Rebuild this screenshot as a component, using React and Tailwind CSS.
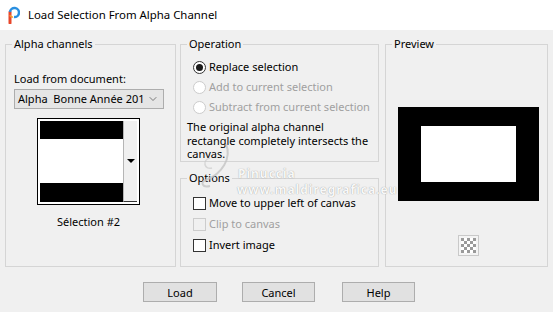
import { ChevronDown } from 'lucide-react'

function Radio({ checked, disabled, label }) {
  return (
    <div className="flex h-[20px] items-center gap-[3px] whitespace-nowrap">
      <span
        className={`grid h-[13px] w-[13px] place-items-center rounded-full border bg-white ${
          disabled ? 'border-[#cccccc] bg-[#f0f0f0]' : 'border-[#333333]'
        }`}
      >
        {checked ? <span className="h-[7px] w-[7px] rounded-full bg-[#1a1a1a]" /> : null}
      </span>
      <span className={disabled ? 'text-[#a0a0a0]' : 'text-black'}>{label}</span>
    </div>
  )
}

function Check({ disabled, label }) {
  return (
    <div className="flex h-[21px] items-center gap-[3px] whitespace-nowrap">
      <span
        className={`h-[13px] w-[13px] border ${
          disabled ? 'border-[#cccccc] bg-[#f0f0f0]' : 'border-[#333333] bg-white'
        }`}
      />
      <span className={disabled ? 'text-[#a0a0a0]' : 'text-black'}>{label}</span>
    </div>
  )
}

function Group({ title, className, children }) {
  return (
    <fieldset className={`border border-[#d5d5d5] ${className}`}>
      <legend className="ml-[6px] px-[2px] leading-[16px]">{title}</legend>
      {children}
    </fieldset>
  )
}

function AppIcon() {
  return (
    <svg width="14" height="18" viewBox="0 0 14 18">
      <path d="M4 17 V6" stroke="#e8462a" strokeWidth="3" strokeLinecap="round" fill="none" />
      <path d="M4 6 A4.5 4.5 0 1 1 8 11" stroke="#2a8fe0" strokeWidth="2.5" fill="none" />
      <path d="M4 9 A2.5 2.5 0 0 0 7 11" stroke="#f39a2a" strokeWidth="1.5" fill="none" />
    </svg>
  )
}

function Checker() {
  const cells = []
  for (let r = 0; r < 5; r++) {
    for (let c = 0; c < 5; c++) {
      if ((r + c) % 2 === 0) cells.push(<rect key={`${r}-${c}`} x={3 + c * 3} y={3 + r * 3} width="3" height="3" fill="#9a9a9a" />)
    }
  }
  return (
    <svg width="21" height="21" viewBox="0 0 21 21">
      <rect x="0.5" y="0.5" width="20" height="20" fill="#f4f4f4" stroke="#c9c9c9" />
      <rect x="3" y="3" width="15" height="15" fill="#ffffff" />
      {cells}
    </svg>
  )
}

export default function App() {
  return (
    <div className="relative h-[312px] w-[553px] overflow-hidden bg-[#f0f0f0] font-['Noto_Sans',sans-serif] text-[11px] text-black">
      <div className="flex h-[30px] items-center gap-[8px] bg-white pl-[6px]">
        <AppIcon />
        <span className="text-[11.4px]">Load Selection From Alpha Channel</span>
      </div>

      <div className="flex pt-[6px] pl-[5px]">
        <Group title="Alpha channels" className="h-[231px] w-[171px]">
          <div className="pl-[8px]">
            <p className="mt-[19px] leading-[16px]">Load from document:</p>
            <div className="mt-[2px] flex h-[20px] w-[150px] items-center justify-between border border-[#adadad] bg-[#e5e5e5] pl-[3px] pr-[4px]">
              <span className="whitespace-nowrap">Alpha&nbsp;&nbsp;Bonne Année 201</span>
              <ChevronDown size={12} strokeWidth={1.5} className="text-[#555]" />
            </div>
            <div className="ml-[23px] mt-[9px] w-[103px]">
              <div className="flex h-[87px] w-[103px] border border-black bg-white p-[2px]">
                <div className="flex w-[83px] flex-col">
                  <div className="h-[18px] bg-black" />
                  <div className="h-[46px] bg-white" />
                  <div className="h-[19px] bg-black" />
                </div>
                <div className="flex flex-1 items-center justify-center border-b border-l border-b-[#333] border-l-[#b5b5b5] bg-[#f0f0f0]">
                  <span className="h-0 w-0 border-x-[4px] border-t-[4px] border-x-transparent border-t-black" />
                </div>
              </div>
              <p className="mt-[9px] text-center leading-[16px]">Sélection #2</p>
            </div>
          </div>
        </Group>

        <div className="ml-[4px] flex w-[199px] flex-col">
          <Group title="Operation" className="h-[126px]">
            <div className="mt-[5px] pl-[12px]">
              <Radio checked label="Replace selection" />
              <Radio disabled label="Add to current selection" />
              <Radio disabled label="Subtract from current selection" />
            </div>
            <p className="mt-[3px] whitespace-nowrap pl-[6px] leading-[13.5px]">
              The original alpha channel
              <br />
              rectangle completely intersects the
              <br />
              canvas.
            </p>
          </Group>
          <Group title="Options" className="mt-[8px] h-[97px]">
            <div className="mt-[7px] pl-[12px]">
              <Check label="Move to upper left of canvas" />
              <Check disabled label="Clip to canvas" />
              <Check label="Invert image" />
            </div>
          </Group>
        </div>

        <Group title="Preview" className="ml-[6px] h-[231px] w-[162px]">
          <div className="flex flex-col items-center pl-[12px] pr-[8px]">
            <div className="mt-[55px] flex h-[94px] w-[141px] items-center justify-center bg-black">
              <div className="h-[56px] w-[95px] bg-white" />
            </div>
            <div className="mt-[34px]">
              <Checker />
            </div>
          </div>
        </Group>
      </div>

      <div className="mt-[15px] flex">
        <button className="ml-[143px] h-[20px] w-[74px] border border-[#adadad] bg-[#e1e1e1] leading-none">Load</button>
        <button className="ml-[25px] h-[20px] w-[73px] border border-[#adadad] bg-[#e1e1e1] leading-none">Cancel</button>
        <button className="ml-[27px] h-[20px] w-[73px] border border-[#adadad] bg-[#e1e1e1] leading-none">Help</button>
      </div>

      <svg className="pointer-events-none absolute left-[196px] top-[140px]" width="40" height="52" viewBox="0 0 40 52">
        <path d="M30 4 C 36 18, 26 34, 10 40 C 4 42, 6 48, 14 46" stroke="#c4c4c4" strokeWidth="2" fill="none" opacity="0.8" />
        <path d="M14 18 C 6 20, 8 30, 16 28" stroke="#cccccc" strokeWidth="1.5" fill="none" opacity="0.7" />
      </svg>
      <span className="pointer-events-none absolute left-[238px] top-[165px] text-[12px] font-bold tracking-[1px] text-[#f8f8f8] [text-shadow:0_0_1px_#8c8c8c]">
        Pinuccia
      </span>
      <span className="pointer-events-none absolute left-[237px] top-[181px] whitespace-nowrap text-[12px] font-bold tracking-[1px] text-[#f8f8f8] [text-shadow:0_0_1px_#8c8c8c]">
        www.maldiregrafica.eu
      </span>
    </div>
  )
}
